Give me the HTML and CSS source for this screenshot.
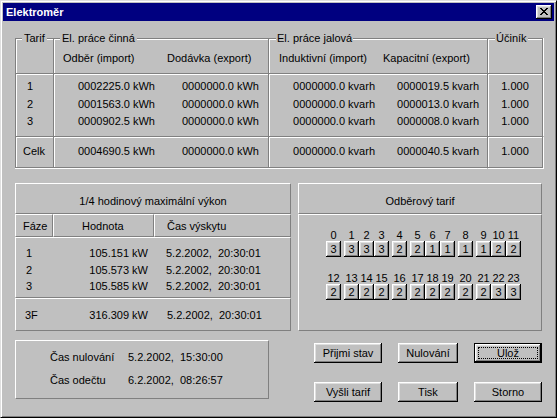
FILE: index.html
```html
<!DOCTYPE html>
<html lang="cs">
<head>
<meta charset="utf-8">
<title>Elektroměr</title>
<link rel="stylesheet" href="styles.css">
</head>
<body>
<div class="window">
  <div class="titlebar">
    <span class="title">Elektroměr</span>
    <span class="close">
      <svg width="8" height="7" viewBox="0 0 8 7" shape-rendering="crispEdges">
        <path fill="#000" d="M0 0h2v1h-2z M6 0h2v1h-2z M1 1h2v1h-2z M5 1h2v1h-2z M2 2h4v1h-4z M3 3h2v1h-2z M2 4h4v1h-4z M1 5h2v1h-2z M5 5h2v1h-2z M0 6h2v1h-2z M6 6h2v1h-2z"/>
      </svg>
    </span>
  </div>

  <div class="content">
    <div class="meter">
      <div class="mh bl"><span class="legend">Tarif</span></div>
      <div class="mh bl span2"><span class="legend">El. práce činná</span>
        <div class="subs subs-a"><span class="sub-1">Odběr (import)</span><span class="sub-2">Dodávka (export)</span></div>
      </div>
      <div class="mh bl span2"><span class="legend legend-w">El. práce jalová</span>
        <div class="subs subs-b"><span class="sub-3">Induktivní (import)</span><span class="sub-4">Kapacitní (export)</span></div>
      </div>
      <div class="mh bl br"><span class="legend legend-w">Účiník</span></div>

      <div class="md bl c-no"><div>1</div><div>2</div><div>3</div></div>
      <div class="md bl v pr-a"><div>0002225.0 kWh</div><div>0001563.0 kWh</div><div>0000902.5 kWh</div></div>
      <div class="md v pr-b"><div>0000000.0 kWh</div><div>0000000.0 kWh</div><div>0000000.0 kWh</div></div>
      <div class="md bl v pr-c"><div>0000000.0 kvarh</div><div>0000000.0 kvarh</div><div>0000000.0 kvarh</div></div>
      <div class="md v pr-d"><div>0000019.5 kvarh</div><div>0000013.0 kvarh</div><div>0000008.0 kvarh</div></div>
      <div class="md bl br ctr"><div>1.000</div><div>1.000</div><div>1.000</div></div>

      <div class="mt bl c-celk">Celk</div>
      <div class="mt bl v pr-a">0004690.5 kWh</div>
      <div class="mt v pr-b">0000000.0 kWh</div>
      <div class="mt bl v pr-c">0000000.0 kvarh</div>
      <div class="mt v pr-d">0000040.5 kvarh</div>
      <div class="mt bl br ctr">1.000</div>
    </div>

    <div class="lower">
      <div class="col-left">
        <div class="raised ptitle">1/4 hodinový maximální výkon</div>
        <div class="heads">
          <div class="raised head h-faze">Fáze</div>
          <div class="raised head h-hod">Hodnota</div>
          <div class="raised head h-cas">Čas výskytu</div>
        </div>
        <div class="raised pdata">
          <div class="prow"><span class="p-no">1</span><span class="p-val">105.151 kW</span><span class="p-date">5.2.2002,&nbsp; 20:30:01</span></div>
          <div class="prow"><span class="p-no">2</span><span class="p-val">105.573 kW</span><span class="p-date">5.2.2002,&nbsp; 20:30:01</span></div>
          <div class="prow"><span class="p-no">3</span><span class="p-val">105.585 kW</span><span class="p-date">5.2.2002,&nbsp; 20:30:01</span></div>
        </div>
        <div class="raised ptotal">
          <div class="prow"><span class="p-no3">3F</span><span class="p-val">316.309 kW</span><span class="p-date3">5.2.2002,&nbsp; 20:30:01</span></div>
        </div>
        <div class="raised times">
          <div class="trow"><span>Čas nulování</span><span>5.2.2002,&nbsp; 15:30:00</span></div>
          <div class="trow"><span>Čas odečtu</span><span>6.2.2002,&nbsp; 08:26:57</span></div>
        </div>
      </div>

      <div class="col-right">
        <div class="raised ptitle">Odběrový tarif</div>
        <div class="raised tbody">
          <div class="tline">
            <div class="tgroup"><div class="tcell"><span class="tlabel">0</span><span class="tbtn">3</span></div></div>
            <div class="tgroup"><div class="tcell"><span class="tlabel">1</span><span class="tbtn">3</span></div><div class="tcell"><span class="tlabel">2</span><span class="tbtn">3</span></div><div class="tcell"><span class="tlabel">3</span><span class="tbtn">3</span></div></div>
            <div class="tgroup"><div class="tcell"><span class="tlabel">4</span><span class="tbtn">2</span></div></div>
            <div class="tgroup"><div class="tcell"><span class="tlabel">5</span><span class="tbtn">2</span></div><div class="tcell"><span class="tlabel">6</span><span class="tbtn">1</span></div><div class="tcell"><span class="tlabel">7</span><span class="tbtn">1</span></div></div>
            <div class="tgroup"><div class="tcell"><span class="tlabel">8</span><span class="tbtn">1</span></div></div>
            <div class="tgroup"><div class="tcell"><span class="tlabel">9</span><span class="tbtn">1</span></div><div class="tcell"><span class="tlabel">10</span><span class="tbtn">2</span></div><div class="tcell"><span class="tlabel">11</span><span class="tbtn">2</span></div></div>
          </div>
          <div class="tline">
            <div class="tgroup"><div class="tcell"><span class="tlabel">12</span><span class="tbtn">2</span></div></div>
            <div class="tgroup"><div class="tcell"><span class="tlabel">13</span><span class="tbtn">2</span></div><div class="tcell"><span class="tlabel">14</span><span class="tbtn">2</span></div><div class="tcell"><span class="tlabel">15</span><span class="tbtn">2</span></div></div>
            <div class="tgroup"><div class="tcell"><span class="tlabel">16</span><span class="tbtn">2</span></div></div>
            <div class="tgroup"><div class="tcell"><span class="tlabel">17</span><span class="tbtn">2</span></div><div class="tcell"><span class="tlabel">18</span><span class="tbtn">2</span></div><div class="tcell"><span class="tlabel">19</span><span class="tbtn">2</span></div></div>
            <div class="tgroup"><div class="tcell"><span class="tlabel">20</span><span class="tbtn">2</span></div></div>
            <div class="tgroup"><div class="tcell"><span class="tlabel">21</span><span class="tbtn">2</span></div><div class="tcell"><span class="tlabel">22</span><span class="tbtn">3</span></div><div class="tcell"><span class="tlabel">23</span><span class="tbtn">3</span></div></div>
          </div>
        </div>
        <div class="btns">
          <div class="btn">Přijmi stav</div>
          <div class="btn">Nulování</div>
          <div class="btn default"><span class="focus">Ulož</span></div>
          <div class="btn">Vyšli tarif</div>
          <div class="btn">Tisk</div>
          <div class="btn">Storno</div>
        </div>
      </div>
    </div>
  </div>
</div>
</body>
</html>
```

FILE: styles.css
```css
* { box-sizing: border-box; }
html, body { margin: 0; padding: 0; }
body {
  width: 557px; height: 418px; overflow: hidden;
  background: #c0c0c0;
  font-family: "Liberation Sans", Arial, sans-serif;
  font-size: 11px; color: #000;
}
.window {
  width: 557px; height: 418px;
  border: 1px solid; border-color: #dfdfdf #000 #000 #dfdfdf;
  box-shadow: inset 1px 1px #fff, inset -1px -1px #808080;
  padding: 2px; background: #c0c0c0;
}
.titlebar {
  height: 18px; background: #000080;
  display: flex; align-items: center;
  padding: 0 2px 0 3px;
}
.title { color: #fff; font-weight: bold; line-height: 13px; }
.close {
  margin-left: auto; width: 16px; height: 14px; background: #c0c0c0;
  box-shadow: inset -1px -1px #000, inset 1px 1px #fff, inset -2px -2px #808080, inset 2px 2px #dfdfdf;
  padding: 3px 0 0 4px;
}
.close svg { display: block; }

.content { padding: 17px 11px 0 12px; }

/* top meter grid */
.meter {
  display: grid;
  grid-template-columns: 38px 107px 108px 110px 109px 56px;
  width: 528px;
}
.span2 { grid-column: span 2; }
.mh { height: 35px; border-top: 1px solid #808080; box-shadow: inset 0 1px #fff; }
.md { height: 63px; border-top: 1px solid #808080; padding-top: 4px; line-height: 17.5px; box-shadow: inset 0 1px #fff; }
.mt { height: 32px; border-top: 1px solid #808080; border-bottom: 1px solid #808080; padding-top: 6px; line-height: 17.5px; box-shadow: inset 0 1px #fff, 0 1px #fff; }
.bl { border-left: 1px solid #808080; }
.br { border-right: 1px solid #808080; }
.mh.bl, .md.bl { box-shadow: inset 1px 1px #fff; }
.mt.bl { box-shadow: inset 1px 1px #fff, 0 1px #fff; }
.mh.bl.br, .md.bl.br { box-shadow: inset 1px 1px #fff, 1px 0 #fff; }
.mt.bl.br { box-shadow: inset 1px 1px #fff, 1px 1px #fff; }

.legend {
  display: block; width: max-content;
  margin: -7px 0 0 6px; padding: 0 2px;
  line-height: 13px; background: #c0c0c0;
}
.legend-w { margin-left: 7px; padding: 0 1px; }
.subs { display: grid; margin-top: 7px; line-height: 13px; }
.subs-a { grid-template-columns: 106px 108px; }
.subs-b { grid-template-columns: 109px 108px; }
.sub-1 { padding-left: 9px; }
.sub-2 { padding-left: 7px; }
.sub-3 { padding-left: 10px; }
.sub-4 { padding-left: 5px; }

.c-no { padding-left: 11px; }
.c-celk { padding-left: 7px; }
.v { text-align: right; }
.pr-a { padding-right: 5px; }
.pr-b { padding-right: 9px; }
.pr-c { padding-right: 3px; }
.pr-d { padding-right: 8px; }
.ctr { text-align: center; }

/* lower part */
.lower { display: flex; margin-top: 15px; }
.col-left { width: 276px; }
.col-right { width: 244px; margin-left: 7px; }
.raised { border: 1px solid; border-color: #fff #808080 #808080 #fff; }
.ptitle { height: 31px; padding-top: 11px; line-height: 13px; text-align: center; }
.heads { display: grid; grid-template-columns: 38px 101px 137px; }
.head { height: 23px; padding-top: 5px; line-height: 13px; }
.h-faze { padding-left: 7px; }
.h-hod { padding-left: 28px; }
.h-cas { padding-left: 12px; }
.pdata { height: 61px; padding-top: 7px; line-height: 16.5px; }
.prow { display: grid; grid-template-columns: 37px 101px 136px; }
.p-no { padding-left: 10px; }
.p-no3 { padding-left: 9px; }
.p-val { text-align: right; padding-right: 6px; }
.p-date { padding-left: 12px; }
.p-date3 { padding-left: 13px; }
.ptotal { height: 33px; padding-top: 9px; line-height: 14px; }
.times {
  margin-top: 9px; width: 254px; height: 59px;
  padding: 5px 0 0 34px; line-height: 23px;
}
.trow { display: grid; grid-template-columns: 78px auto; }

.tbody { height: 117px; padding: 15px 0 0 27px; }
.tline { display: flex; gap: 3px; }
.tline + .tline { margin-top: 16px; }
.tgroup { display: flex; }
.tcell { width: 15px; display: flex; flex-direction: column; align-items: center; }
.tlabel { height: 11px; line-height: 11px; white-space: nowrap; }
.tbtn {
  width: 15px; height: 16px; line-height: 16px; text-align: center;
  background: #c0c0c0;
  box-shadow: inset -1px -1px #000, inset 1px 1px #fff, inset -2px -2px #808080, inset 2px 2px #dfdfdf;
}

.btns {
  margin-top: 12px; padding-left: 16px;
  display: grid; grid-template-columns: 68px 60px 68px;
  column-gap: 16px; row-gap: 19px;
}
.btn {
  height: 20px; display: flex; align-items: center; justify-content: center;
  background: #c0c0c0;
  box-shadow: inset -1px -1px #000, inset 1px 1px #fff, inset -2px -2px #808080, inset 2px 2px #dfdfdf;
}
.btn.default { border: 1px solid #000; padding: 3px; }
.focus {
  flex: 1; align-self: stretch;
  border: 1px dotted #000;
  display: flex; align-items: center; justify-content: center;
}
```
